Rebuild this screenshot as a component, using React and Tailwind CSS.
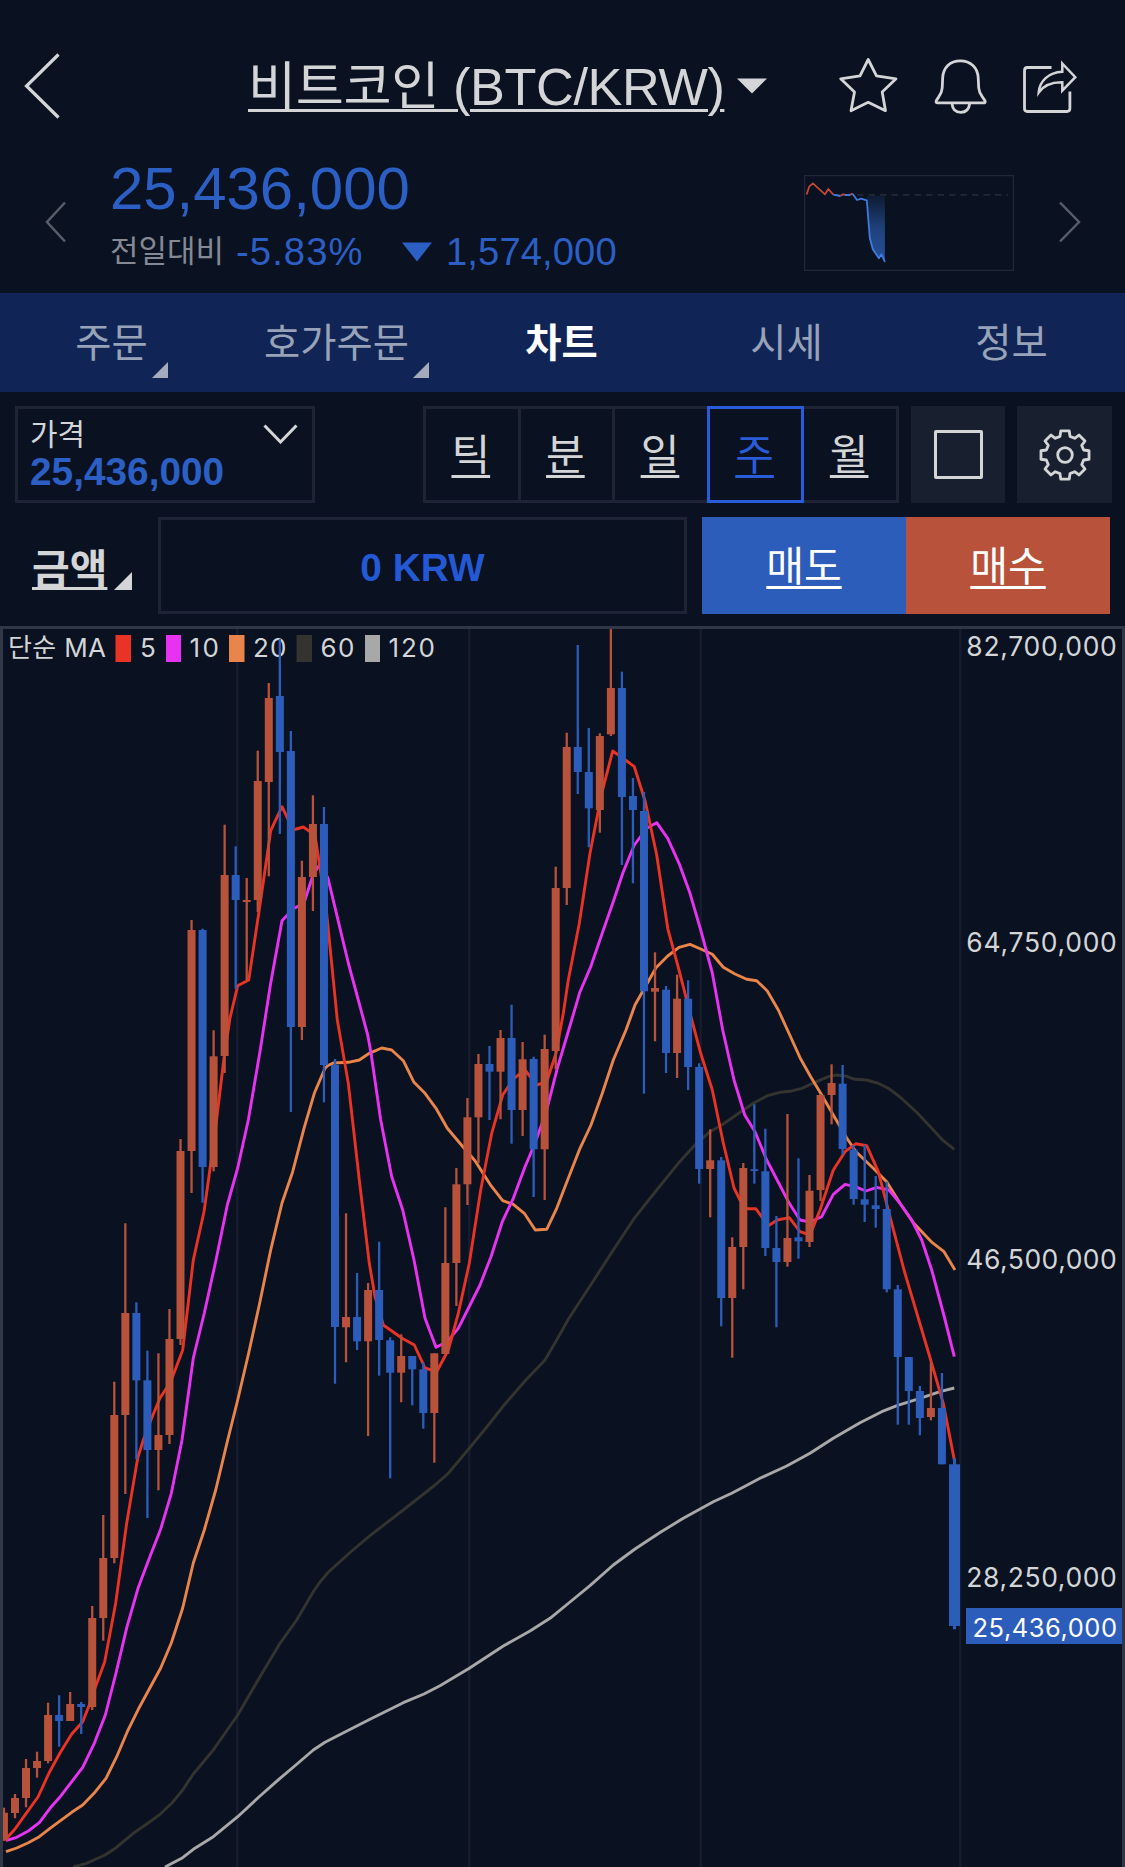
import React from "react";

const UP = "#b8523a";
const DOWN = "#2c5dbb";

// [direction, high, body top, body bottom, low]
const candles = [
  [1, 1807.7, 1812.7, 1840.7, 1840.7], [1, 1794, 1798, 1813, 1818.3], [1, 1759, 1768, 1798, 1807.3],
  [1, 1751.7, 1761, 1768, 1777.7], [1, 1702.7, 1715, 1761, 1763.3], [0, 1695.3, 1715, 1721, 1746.7],
  [1, 1692, 1704, 1721, 1721], [0, 1702, 1704, 1707, 1734], [1, 1606, 1618, 1707, 1710],
  [1, 1515, 1558, 1618, 1640.7], [1, 1381.7, 1415, 1558, 1563.3], [1, 1223.3, 1313, 1415, 1494],
  [0, 1302.3, 1313, 1380.3, 1459.3], [0, 1350.7, 1380.3, 1450, 1518], [1, 1353.3, 1435, 1450, 1490.3],
  [1, 1309, 1339, 1435, 1444], [1, 1139, 1151, 1339, 1345], [1, 920, 930, 1151, 1193],
  [0, 928.7, 930, 1167, 1202.7], [1, 1030.3, 1056.3, 1167, 1171.3], [1, 824.7, 875, 1056, 1073],
  [0, 846.3, 875, 900, 989], [1, 878, 900, 902, 980], [1, 750.7, 781, 900, 912],
  [1, 683, 698, 782, 876.3], [0, 639, 696, 752, 834], [0, 731, 751, 1027, 1112],
  [1, 860.7, 877, 1027, 1040], [1, 795.3, 824, 877, 911], [0, 807, 824, 1065, 1102.3],
  [0, 1059, 1065, 1327, 1383.7], [1, 1213.3, 1317, 1327.3, 1362.3], [0, 1273, 1317, 1341.3, 1350],
  [1, 1283, 1290, 1341.3, 1436], [0, 1241.7, 1290, 1340, 1375.7], [0, 1337.3, 1340.3, 1372.7, 1478.3],
  [1, 1334.3, 1356, 1372.7, 1402.3], [0, 1356, 1356, 1369.3, 1405.3], [0, 1362.3, 1369.3, 1413, 1428.7],
  [1, 1353.3, 1353.3, 1413, 1462.7], [1, 1207.3, 1263, 1354, 1354], [1, 1168, 1184.3, 1263, 1306],
  [1, 1098, 1117.3, 1184.3, 1205], [1, 1054, 1064, 1117.3, 1163], [0, 1046, 1064, 1071.7, 1120],
  [1, 1030, 1038, 1071.7, 1119.3], [0, 1004.7, 1038, 1110, 1143.7], [1, 1042, 1059.3, 1110, 1136],
  [0, 1056.7, 1059, 1149.3, 1197], [1, 1034.7, 1049, 1149.3, 1200], [1, 866.7, 888, 1051, 1069.3],
  [1, 732.7, 747, 888, 905], [0, 645, 747, 772, 794], [0, 728, 772, 808.3, 847.3],
  [1, 733.3, 736, 810, 832.7], [1, 628.7, 688, 734.3, 736], [0, 671.7, 688, 797, 865],
  [0, 778, 796, 810, 883.3], [0, 792, 811, 991.3, 1093.7], [1, 952.3, 988, 991.7, 1041.3],
  [0, 986, 989.7, 1053, 1073], [1, 974.7, 998.7, 1053, 1078], [0, 980.3, 998.7, 1067, 1090],
  [0, 1063.3, 1067, 1169, 1183.7], [1, 1129.3, 1160.3, 1169, 1217.3], [0, 1157, 1160.3, 1298, 1326.3],
  [1, 1237.3, 1247, 1298, 1357.7], [1, 1163, 1168, 1247, 1289.3], [0, 1104.3, 1169.3, 1171, 1183.7],
  [0, 1128.7, 1171.3, 1248, 1256], [0, 1216, 1248, 1262, 1327.3], [1, 1114, 1238, 1262, 1266.7],
  [0, 1158.3, 1237.3, 1241.3, 1258.7], [1, 1175, 1190.7, 1242, 1247], [1, 1094, 1095, 1190, 1201],
  [1, 1064.3, 1083, 1095, 1124.3], [0, 1065, 1083.7, 1149, 1154.7], [0, 1145, 1149.7, 1199, 1204.7],
  [0, 1145, 1199.3, 1204.7, 1222], [0, 1176, 1205.3, 1209, 1227.7], [0, 1181.7, 1209, 1289.3, 1292.3],
  [0, 1285, 1289.3, 1357, 1424.7], [0, 1357, 1357, 1391, 1424.7], [0, 1386, 1391, 1418, 1435.3],
  [1, 1362.7, 1408, 1417, 1420.3], [0, 1373, 1408, 1464.3, 1464.3],
];

const averages = [
  ["#a8a8a8", "165,1867 181.7,1858.3 193.3,1849.3 213.3,1836.7 237.7,1816.7 260,1796 280,1778.3 297,1764 313.3,1750 325,1742.3 345,1732 370,1719.3 403.3,1702.7 424,1694 440,1685.7 469.3,1668.3 503.3,1646 530,1631 550,1618.3 570,1602 590,1585.7 613.3,1565 635,1549 660,1532.5 683.3,1518.3 713.3,1501.7 731.7,1493.3 745,1486.3 760,1478.3 786.7,1466 810,1453.3 833.3,1438.3 860,1422.7 881.7,1411.7 897.7,1405.3 920,1398.3 940,1391.7 954.3,1388"],
  ["#33332f", "73.3,1867 86.7,1863.3 105,1855 116,1847.7 133.3,1833.3 146,1824.5 160,1814.3 171.7,1803.3 182.7,1790 193.3,1774 213.3,1750 237.7,1715 260,1676.7 280,1643.3 296.7,1620 313.3,1591.7 320,1582 328,1572.5 350,1552.5 370,1535.7 403.3,1510 435,1485 448.3,1473.3 469.3,1448.3 486,1428 503.3,1406 525,1381 545,1360 556.7,1340 568.3,1319.3 590,1286 613.3,1250 635,1217.3 656.7,1190 678.3,1163.3 693.3,1146.7 710,1131.7 723.3,1124 743.3,1110 755,1102.3 768.3,1095.3 780,1092.3 790,1091.3 801.7,1088.3 816.7,1081.7 828.3,1076.7 836.7,1075 846.7,1076.3 855,1079.3 866.7,1080 878.3,1083.3 890,1089.3 900,1097 916.7,1112.3 933.3,1130 943.3,1140.7 954.3,1149.3"],
  ["#e9854a", "6,1851.7 16.7,1848 28.3,1842.7 39.3,1836.7 50,1828.3 71.7,1812.3 82.7,1805 94,1793.3 106,1778.3 116.7,1756.7 127.3,1731.7 138.3,1709.3 160.7,1668 171.3,1643 182.7,1608 193.3,1563 204.3,1530 215.7,1490 227.7,1440 237.7,1400 248.7,1353 259.7,1303 270.7,1250 282,1203 292.7,1171.7 304,1128.3 314.3,1093.3 325,1068.3 328,1065.5 333.3,1063 348.3,1062.3 359.3,1060 369.3,1053.3 381.7,1048 391.7,1050 403.3,1060.7 414,1082.3 425,1093.3 436,1108.3 447.3,1128.3 463.3,1147.3 475,1160.7 491,1185.7 502.7,1200.7 513.3,1204.3 524.3,1213.3 535.3,1230 546.7,1229.3 556.7,1208.3 568.3,1178.3 580,1148.3 591,1125 602.3,1093.3 613.3,1060 626,1030 635,1005 645.3,986.7 656,967.7 667.7,956 679,947.3 690,944.3 700.7,949 712.3,954.3 723.3,967.3 735,974 746.7,979.3 756.7,980.7 767.3,991 778.3,1010 789.3,1034 800,1057.7 810.7,1076.7 821.7,1095 833.3,1115 846.7,1138 856,1151.7 873.3,1168.3 886.7,1181.7 900,1203.3 913.3,1222.7 932.3,1242.7 944,1251.7 955,1270"],
  ["#e832f2", "6,1840.7 16.7,1837.3 28.3,1831 39.3,1822.7 50,1808.3 61,1795.7 82.7,1767.3 94.3,1743.3 105.3,1715 116,1673 127,1626.7 138,1588.3 149.3,1558.3 160.7,1529 171.3,1493.3 182,1440 193.3,1358 204.3,1313 216,1260 227.3,1205 237.7,1168 248.3,1120 259.7,1053.3 270.7,983 282,920.7 293,909 304,903 313,875 320,864 328,878.3 348.3,963 367.7,1035 371,1053 380.7,1120 391.7,1176.7 402.7,1210 414,1260 425,1318.3 436,1347.3 447.3,1341.7 458.3,1328.3 480,1285 491,1256.7 502.3,1221.7 513.3,1198.3 525,1166.7 535,1143.3 546.7,1110 557.3,1068.3 568.7,1030 580,991.7 590.7,966.7 601,936.7 612.7,903.3 623.3,871.7 634.3,845 646.7,828.3 656.7,822.7 667.7,838.3 679,863.3 690,893.3 700.7,930 712.3,973 722.7,1030 734,1080 744.7,1115 755,1131.7 766.7,1160 789.3,1203.3 800,1220 810,1222 821.7,1216.7 833.3,1194.3 845,1184.3 855,1186.7 866,1191 876.7,1187.3 889,1190 900,1203.3 911.7,1220 921.7,1240 931.7,1270 943.3,1313 954.3,1356.7"],
  ["#e93325", "6.7,1838.3 15,1829 26.7,1812.7 38,1797 49,1773 60,1753 71.7,1734 82.7,1721.7 89.3,1705 93.7,1691.7 104.7,1661.7 115.7,1603 126.7,1523 137.7,1458 143.3,1440 151.7,1418 160,1398 170.7,1381.7 182.7,1350 193.3,1260 204,1211.7 215,1133 224,1058 230,1018 237.7,985.7 248.7,980 259.7,906.7 270.7,830.7 282,806.7 293,830 303.3,827 315,835 326,906.7 337.3,1020 348.3,1083.3 359.3,1180 369.3,1263.3 375,1296.7 383.3,1325 401.7,1338 414.3,1345 425,1368 436.7,1371.7 448.3,1350 458.3,1313.3 469.3,1263.3 480.7,1190 491.7,1133.3 502.7,1095 514,1078.3 525,1070 536.7,1085 546.7,1081.7 556,1053.3 563.3,1013.3 568.3,980 579.3,923.3 590,853.3 601.7,793.3 612.7,751 622.7,758 634.3,766.7 645.3,801.7 656.7,855 667.7,928.3 679,970 690,1013 700.7,1053.3 712.3,1090 723.3,1143 734,1188 740,1200 746.7,1208.7 755.7,1208.7 768.3,1225.7 777.3,1220 789.3,1217.7 800,1231.7 810,1235 820,1210 833.3,1170 845,1151.7 856,1143.7 866.7,1145.7 878.3,1171.7 890,1216.7 904,1270 930.7,1360 943.3,1403.3 954.3,1460"],
];

const legend = [
  ["#e93325", 115.5, 15.5, "5", 140, 15],
  ["#e832f2", 166, 15, "10", 189.5, 29.5],
  ["#e9854a", 229, 15.5, "20", 253, 33.5],
  ["#33332f", 296.5, 15.5, "60", 320.5, 34],
  ["#a8a8a8", 365, 15, "120", 388.5, 46.5],
];

const axis = [["82,700,000", 655.5], ["64,750,000", 952], ["46,500,000", 1269], ["28,250,000", 1587]];

function Chart() {
  return (
    <svg className="block w-full" height="1241" viewBox="0 626 1125 1241" fontFamily='Inter, "Noto Sans CJK KR", sans-serif'>
      {[236, 468, 699.5, 959].map((x) => (
        <rect key={x} x={x} y="629" width="2.5" height="1238" fill="#161c2d" />
      ))}
      <text x="8" y="657" fontSize="26" fill="#d3d5d6" textLength="98" lengthAdjust="spacing">단순 MA</text>
      {legend.map(([c, x, w, t, tx, tw]) => (
        <g key={t}>
          <rect x={x} y="635" width={w} height="27" fill={c} />
          <text x={tx} y="656.7" fontSize="26" fill="#d3d5d6" textLength={tw}>{t}</text>
        </g>
      ))}
      {averages.map(([c, p]) => (
        <polyline key={c} points={p} fill="none" stroke={c} strokeWidth="2.9" strokeLinejoin="round" />
      ))}
      {candles.map(([up, h, t, b, l], i) => {
        const x = 3.95 + i * 11.035;
        return (
          <g key={i} fill={up ? UP : DOWN}>
            <rect x={x - 1.15} y={h} width="2.3" height={l - h} />
            <rect x={x - 4} y={t} width="8" height={b - t} />
          </g>
        );
      })}
      <g fill={DOWN}>
        <rect x="953" y="1458.3" width="3" height="171" />
        <rect x="949" y="1464.3" width="11" height="161.7" />
      </g>
      {axis.map(([t, y]) => (
        <text key={t} x="966.3" y={y} fontSize="26.5" fill="#d3d5d6" textLength="150.5">{t}</text>
      ))}
      <rect x="966" y="1608" width="156" height="36" fill={DOWN} />
      <text x="972.5" y="1636.5" fontSize="25.5" fill="#ffffff" textLength="144.5">25,436,000</text>
      <path d="M1.5 1867V627.5H1123.5V1867" fill="none" stroke="#303847" strokeWidth="3" />
    </svg>
  );
}

function MiniChart() {
  return (
    <svg width="210" height="96" viewBox="804 175 210 96" className="shrink-0" fill="none" strokeWidth="1.8" strokeLinejoin="round">
      <defs>
        <linearGradient id="fall" x1="0" y1="0" x2="0" y2="1">
          <stop offset="0" stopColor="#2c62b8" stopOpacity="0.12" />
          <stop offset="0.5" stopColor="#2c62b8" stopOpacity="0.6" />
          <stop offset="1" stopColor="#2c62b8" stopOpacity="0.8" />
        </linearGradient>
      </defs>
      <rect x="804.5" y="175.5" width="209" height="95" stroke="#222837" strokeWidth="1.4" />
      <path d="M834 194.8H1008" stroke="#222837" strokeDasharray="6.5 5" />
      <path d="M866.8 196V200.3L869.8 238.3 872.8 249.3 878.9 258.3 881.5 254.3 884.9 262V196Z" fill="url(#fall)" />
      <path d="M806.6 194.5L809.2 186.7 812.9 183.3 825 194.3 828.3 189 833.3 194.7M840.4 196L843 194.3 846 195M850 195L852.3 193.5" stroke="#c34836" />
      <path d="M833.3 194.7L840.4 196M845 195L850 195M852.3 193.5L857.1 200 861.1 198.7 866.8 200.3 869.8 238.3 872.8 249.3 878.9 258.3 881.5 254.3 884.9 262" stroke="#3d7be0" />
    </svg>
  );
}

function HeaderIcons() {
  return (
    <svg width="242" height="62" viewBox="837 54 242 62" fill="none" stroke="#d3d5d6" strokeWidth="2.8" strokeLinejoin="round">
      <path d="M868.2 58.5L876.5 74.8 896 77.8 882.2 91 885.5 109.7 868.2 101.3 851 109.7 854.5 91 840.7 77.8 860 74.8Z" />
      <path d="M960.3 59.8C950 59.8 943.2 66.5 942.7 76.5L942.2 87C941.8 94 938 96 936.2 100 935.7 101.3 936.4 101.9 937.4 101.9H983.6C984.8 101.9 985.6 101.3 985.1 100.1 983.3 96 979.2 94 978.7 87L978.2 76.5C977.7 66.5 970.6 59.8 960.3 59.8Z" />
      <path d="M952 102.5C952.5 108.5 955.8 111.3 960.8 111.3S969 108.5 969.7 102.5" />
      <path d="M1051.5 66.5H1027.5Q1024.5 66.5 1024.5 69.5V107.5Q1024.5 110.5 1027.5 110.5H1066.7Q1069.9 110.5 1069.9 107.5V90.5" />
      <path strokeLinejoin="miter" strokeWidth="2.5" d="M1062.3 62.5L1075.3 76.2 1062.3 89.7V81.2C1051.5 81 1043.5 84.5 1038.7 91.5 1039.5 80 1048.5 71.5 1062.3 70.8Z" />
    </svg>
  );
}

function Gear() {
  const tooth = [];
  for (let i = 0; i < 8; i++) {
    const at = (r, deg) => {
      const a = ((i * 45 + deg) * Math.PI) / 180;
      return (27 + r * Math.sin(a)).toFixed(2) + "," + (27 - r * Math.cos(a)).toFixed(2);
    };
    tooth.push(at(19.3, -15), at(24.4, -10), at(24.4, 10), at(19.3, 15));
  }
  return (
    <svg width="54" height="54" viewBox="0 0 54 54" fill="none" stroke="#d3d5d6" strokeWidth="2.8" strokeLinejoin="round">
      <polygon points={tooth.join(" ")} />
      <circle cx="27" cy="27" r="7.3" />
    </svg>
  );
}

const tabs = [["주문", true], ["호가주문", true], ["차트", false], ["시세", false], ["정보", false]];
const periods = ["틱", "분", "일", "주", "월"];

export default function App() {
  return (
    <div className="flex h-[1867px] w-[1125px] flex-col overflow-hidden bg-[#0a1121] font-['Liberation_Sans','Noto_Sans_CJK_KR',sans-serif] text-[#d3d5d6]">
      <header className="flex h-[171px] shrink-0 items-center pl-6">
        <svg width="37" height="68" viewBox="0 0 37 68" fill="none" stroke="#d3d5d6" strokeWidth="3.2">
          <path d="M34.5 2.5L2.5 34 34.5 65.5" />
        </svg>
        <h1 className="ml-[187px] w-[478px] pt-[3px] text-[52.3px] leading-[60px] font-normal tracking-[-0.4px] whitespace-nowrap underline decoration-[3px] underline-offset-[4px]">
          비트코인 (BTC/KRW)
        </h1>
        <svg className="ml-[11px]" width="30" height="16" viewBox="0 0 30 16"><path d="M0 0.5H30L15 15.5Z" fill="#d3d5d6" /></svg>
        <div className="ml-[70px]"><HeaderIcons /></div>
      </header>

      <section className="flex h-[122px] shrink-0 items-start pl-[44px] text-[#2c5fc4]">
        <svg className="mt-[30px]" width="23" height="42" viewBox="0 0 23 42" fill="none" stroke="#585d69" strokeWidth="2.5"><path d="M21 1.5L3 21 21 40.5" /></svg>
        <div className="-mt-[16px] ml-[43px] w-[694px]">
          <div className="h-[75px] text-[59.9px] leading-[68px]">25,436,000</div>
          <div className="flex h-[44px] items-center text-[38.2px] leading-[44px]">
            <span className="w-[126px] text-[31px] text-[#858993]">전일대비</span>
            <span className="w-[166px] tracking-[1.1px]">-5.83%</span>
            <svg width="30" height="20" viewBox="0 0 30 20"><path d="M0 0.5H30L15 19.5Z" fill="#2c5fc4" /></svg>
            <span className="ml-[14px] tracking-[0.1px]">1,574,000</span>
          </div>
        </div>
        <div className="mt-1"><MiniChart /></div>
        <svg className="mt-[30px] ml-[44px]" width="23" height="42" viewBox="0 0 23 42" fill="none" stroke="#585d69" strokeWidth="2.5"><path d="M2 1.5L21 21 2 40.5" /></svg>
      </section>

      <nav className="grid h-[99px] shrink-0 grid-cols-5 bg-[#102556]">
        {tabs.map(([t, menu]) => (
          <div key={t} className={t === "차트" ? "flex justify-center text-[39.4px] leading-[100px] font-bold text-white" : "flex justify-center text-[39.4px] leading-[100px] text-[#98a2b8]"}>
            <span className="relative -left-px">
              {t}
              {menu && (
                <svg className="absolute top-[69px] -right-[20px]" width="16" height="16" viewBox="0 0 16 16"><path d="M16 0V16H0Z" fill="#a3abbc" /></svg>
              )}
            </span>
          </div>
        ))}
      </nav>

      <section className="flex shrink-0 pt-[14px] pl-[15px]">
        <div className="flex h-[97px] w-[300px] justify-between border-[3px] border-[#1e2435] pr-[14px] pl-[12px]">
          <div>
            <div className="mt-[7px] h-[35px] text-[30px] leading-[37px]">가격</div>
            <div className="h-[42px] text-[38.8px] leading-[42px] font-bold text-[#2c5fc4]">25,436,000</div>
          </div>
          <svg className="mt-[15px]" width="35" height="20" viewBox="0 0 35 20" fill="none" stroke="#d3d5d6" strokeWidth="3"><path d="M1.5 1.5L17.5 18 33.5 1.5" /></svg>
        </div>
        <div className="ml-[108px] flex h-[97px] w-[476px]">
          {periods.map((p) => (
            <div
              key={p}
              className={
                p === "주"
                  ? "relative -mr-[3px] w-[97.6px] border-[3px] border-[#285cd8] pr-[2px] text-center text-[42px] leading-[93px] text-[#285cd8] underline decoration-[3px] underline-offset-[5px]"
                  : "-mr-[3px] w-[97.6px] border-[3px] border-[#1e2435] pr-[2px] text-center text-[42px] leading-[93px] underline decoration-[3px] underline-offset-[5px]"
              }
            >
              {p}
            </div>
          ))}
        </div>
        <div className="ml-[12px] flex h-[97px] w-[94px] items-center justify-center bg-[#182030]">
          <div className="size-[49px] rounded-[2px] border-[3px] border-[#d3d5d6]" />
        </div>
        <div className="ml-[12px] flex h-[97px] w-[95px] items-center justify-center bg-[#182030]">
          <Gear />
        </div>
      </section>

      <section className="flex shrink-0 pt-[14px] pb-[12px] pl-[32px]">
        <div className="flex h-[97px] w-[126px]">
          <span className="text-[41px] leading-[107px] font-bold underline decoration-[3px] underline-offset-[3px]">금액</span>
          <svg className="mt-[55px] ml-[7px]" width="18" height="18" viewBox="0 0 18 18"><path d="M18 0V18H0Z" fill="#d3d5d6" /></svg>
        </div>
        <div className="h-[97px] w-[529px] border-[3px] border-[#1e2435] text-center text-[38.8px] leading-[95px] font-bold text-[#2459d6]">0 KRW</div>
        <button className="ml-[15px] h-[97px] w-[204px] bg-[#2d5dbb] pt-[3px] text-[41px] leading-[94px] text-white underline decoration-[3px] underline-offset-[5px]">매도</button>
        <button className="h-[97px] w-[204px] bg-[#b8523a] pt-[3px] text-[41px] leading-[94px] text-white underline decoration-[3px] underline-offset-[5px]">매수</button>
      </section>

      <Chart />
    </div>
  );
}
